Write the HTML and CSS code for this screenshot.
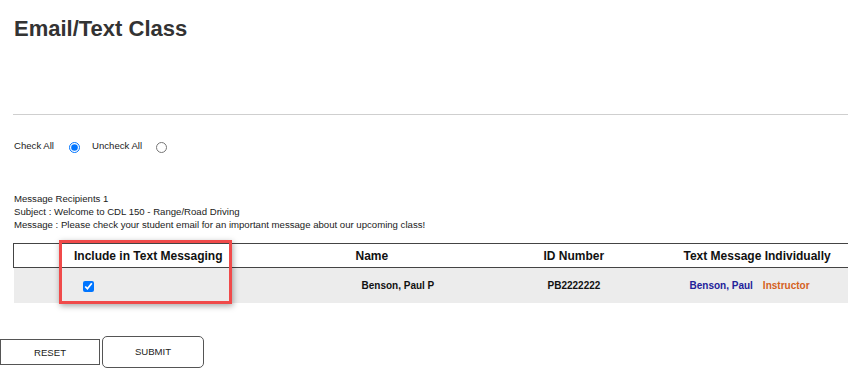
FILE: index.html
```html
<!DOCTYPE html>
<html lang="en">
<head>
  <title>Email/Text Class</title>
  <link rel="stylesheet" href="styles.css">
</head>
<body>
<div class="content">
  <h1 class="title">Email/Text Class</h1>
  <hr class="rule">

  <div class="checks">
    <label for="checkAll">Check All</label>
    <input type="radio" name="checkmode" id="checkAll" class="radio" checked>
    <label for="uncheckAll">Uncheck All</label>
    <input type="radio" name="checkmode" id="uncheckAll" class="radio">
  </div>

  <div class="summary">
    <div>Message Recipients 1</div>
    <div>Subject : Welcome to CDL 150 - Range/Road Driving</div>
    <div>Message : Please check your student email for an important message about our upcoming class!</div>
  </div>

  <div class="grid-wrap">
    <table class="grid">
      <colgroup>
        <col class="w1"><col class="w2"><col class="w3"><col class="w4">
      </colgroup>
      <thead>
        <tr>
          <th class="h1">Include in Text Messaging</th>
          <th class="h2">Name</th>
          <th class="h3">ID Number</th>
          <th class="h4">Text Message Individually</th>
        </tr>
      </thead>
      <tbody>
        <tr>
          <td class="d1"><input type="checkbox" class="pick" checked></td>
          <td class="d2">Benson, Paul P</td>
          <td class="d3">PB2222222</td>
          <td class="d4"><a class="who">Benson, Paul</a><span class="role">Instructor</span></td>
        </tr>
      </tbody>
    </table>
    <div class="highlight"></div>
  </div>
</div>

<div class="actions">
  <button class="btn">RESET</button>
  <button class="btn btn-hover">SUBMIT</button>
</div>
</body>
</html>
```

FILE: styles.css
```css
html, body { overflow: hidden; }
body { margin: 0; font-family: "Liberation Sans", Arial, sans-serif; font-size: 9.6px; color: #222; }

.content { padding: 16px 0 0 13px; }

.title { margin: 0 0 0 1px; font-size: 22px; line-height: 26px; font-weight: bold; color: #333; }

.rule { margin: 72px 0 0 0; height: 0; border: 0; border-top: 1px solid #cfcfcf; }

.checks { display: flex; align-items: center; margin-top: 23px; height: 16px; padding-left: 1px; }
.checks label { line-height: 16px; }
.radio { width: 11px; height: 11px; margin: 2px 12px 0 15px; }
#uncheckAll { margin-left: 14px; }

.summary { margin-top: 38px; line-height: 13px; padding-left: 1px; }

.grid-wrap { position: relative; margin-top: 12px; }

.grid { border-collapse: collapse; table-layout: fixed; width: 870px; }
.w1 { width: 268px; }
.w2 { width: 180px; }
.w3 { width: 222px; }
.w4 { width: 200px; }

.grid th {
  height: 23px;
  padding: 0;
  font-size: 12px;
  font-weight: bold;
  color: #111;
  text-align: left;
  white-space: nowrap;
  border-top: 1px solid #444;
  border-bottom: 1px solid #444;
}
.grid .h1 { border-left: 1px solid #444; padding-left: 60px; }
.grid .h2 { padding-left: 74px; }
.grid .h3 { padding-left: 82px; }
.grid .h4 { padding-left: 0; }

.grid td {
  height: 35px;
  padding: 0;
  font-size: 10px;
  font-weight: bold;
  color: #111;
  white-space: nowrap;
  background-color: #ececec;
}
.grid .d1 { padding-left: 65px; }
.grid .d2 { padding-left: 80px; }
.grid .d3 { padding-left: 86px; }
.grid .d4 { padding-left: 6px; }

.pick { width: 11px; height: 11px; margin: 2px 0 0 4px; vertical-align: middle; }

.who { color: #22229a; margin-right: 10px; }
.role { color: #d4601c; }

.highlight {
  position: absolute;
  left: 46px;
  top: -3px;
  width: 167px;
  height: 58px;
  border: 3px solid #f04a4a;
  box-shadow: 1px 2px 6px rgba(0, 0, 0, 0.35);
  pointer-events: none;
}

.actions { display: flex; align-items: center; gap: 2px; margin-top: 33px; }

.btn {
  width: 100px;
  height: 26px;
  padding: 0;
  font-family: "Liberation Sans", Arial, sans-serif;
  font-size: 9.6px;
  color: #222;
  background: #fff;
  border: 1px solid #555;
  border-radius: 0;
}
.btn-hover { width: 102px; height: 32px; border-radius: 5px; padding-bottom: 2px; }
```
